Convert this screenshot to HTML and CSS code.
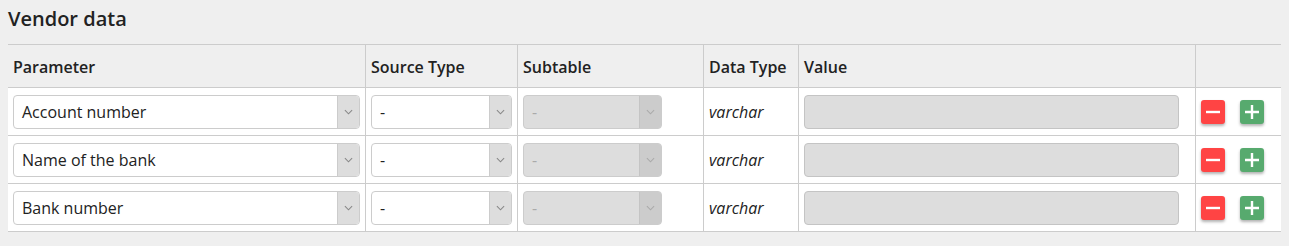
FILE: index.html
```html
<!DOCTYPE html>
<html lang="en">

<head>
    <meta charset="UTF-8">
    <meta name="viewport" content="width=device-width, initial-scale=1.0">
    <title>Vendor data</title>
    <link rel="stylesheet" href="styles.css">
</head>

<body>

    <h2 class="section_title">Vendor data</h2>

    <table class="param_table">
        <thead>
            <tr>
                <th class="col_param">Parameter</th>
                <th class="col_source">Source Type</th>
                <th class="col_sub">Subtable</th>
                <th class="col_type">Data Type</th>
                <th class="col_value">Value</th>
                <th class="col_actions"></th>
            </tr>
        </thead>
        <tbody>
            <tr>
                <td>
                    <div class="fake_select">
                        <span class="fake_select_text">Account number</span>
                        <span class="fake_select_arrow"><svg viewBox="0 0 10 6"><path d="M1 1l4 4 4-4"/></svg></span>
                    </div>
                </td>
                <td>
                    <div class="fake_select">
                        <span class="fake_select_text">-</span>
                        <span class="fake_select_arrow"><svg viewBox="0 0 10 6"><path d="M1 1l4 4 4-4"/></svg></span>
                    </div>
                </td>
                <td>
                    <div class="fake_select disabled">
                        <span class="fake_select_text">-</span>
                        <span class="fake_select_arrow"><svg viewBox="0 0 10 6"><path d="M1 1l4 4 4-4"/></svg></span>
                    </div>
                </td>
                <td class="data_type">varchar</td>
                <td><div class="value_input"></div></td>
                <td>
                    <div class="actions">
                        <span class="btn btn_remove"><svg viewBox="0 0 24 24"><path d="M5 12h14"/></svg></span>
                        <span class="btn btn_add"><svg viewBox="0 0 24 24"><path d="M5 12h14M12 5v14"/></svg></span>
                    </div>
                </td>
            </tr>
            <tr>
                <td>
                    <div class="fake_select">
                        <span class="fake_select_text">Name of the bank</span>
                        <span class="fake_select_arrow"><svg viewBox="0 0 10 6"><path d="M1 1l4 4 4-4"/></svg></span>
                    </div>
                </td>
                <td>
                    <div class="fake_select">
                        <span class="fake_select_text">-</span>
                        <span class="fake_select_arrow"><svg viewBox="0 0 10 6"><path d="M1 1l4 4 4-4"/></svg></span>
                    </div>
                </td>
                <td>
                    <div class="fake_select disabled">
                        <span class="fake_select_text">-</span>
                        <span class="fake_select_arrow"><svg viewBox="0 0 10 6"><path d="M1 1l4 4 4-4"/></svg></span>
                    </div>
                </td>
                <td class="data_type">varchar</td>
                <td><div class="value_input"></div></td>
                <td>
                    <div class="actions">
                        <span class="btn btn_remove"><svg viewBox="0 0 24 24"><path d="M5 12h14"/></svg></span>
                        <span class="btn btn_add"><svg viewBox="0 0 24 24"><path d="M5 12h14M12 5v14"/></svg></span>
                    </div>
                </td>
            </tr>
            <tr>
                <td>
                    <div class="fake_select">
                        <span class="fake_select_text">Bank number</span>
                        <span class="fake_select_arrow"><svg viewBox="0 0 10 6"><path d="M1 1l4 4 4-4"/></svg></span>
                    </div>
                </td>
                <td>
                    <div class="fake_select">
                        <span class="fake_select_text">-</span>
                        <span class="fake_select_arrow"><svg viewBox="0 0 10 6"><path d="M1 1l4 4 4-4"/></svg></span>
                    </div>
                </td>
                <td>
                    <div class="fake_select disabled">
                        <span class="fake_select_text">-</span>
                        <span class="fake_select_arrow"><svg viewBox="0 0 10 6"><path d="M1 1l4 4 4-4"/></svg></span>
                    </div>
                </td>
                <td class="data_type">varchar</td>
                <td><div class="value_input"></div></td>
                <td>
                    <div class="actions">
                        <span class="btn btn_remove"><svg viewBox="0 0 24 24"><path d="M5 12h14"/></svg></span>
                        <span class="btn btn_add"><svg viewBox="0 0 24 24"><path d="M5 12h14M12 5v14"/></svg></span>
                    </div>
                </td>
            </tr>
        </tbody>
    </table>

</body>

</html>
```

FILE: styles.css
```css
body {
    margin: 0;
    padding: 0 8px;
    background: #efefef;
    font-family: "Open Sans", sans-serif;
    color: #222;
}

.section_title {
    margin: 0;
    padding: 6px 0 0;
    height: 44px;
    box-sizing: border-box;
    font-size: 20px;
    font-weight: 600;
    line-height: 26px;
}

.param_table {
    width: 1273px;
    border-collapse: collapse;
    table-layout: fixed;
}

.param_table th,
.param_table td {
    border: 1px solid #cccccc;
    padding: 7px 5px 6px;
    text-align: left;
    vertical-align: middle;
}

.param_table th:first-child,
.param_table td:first-child {
    border-left: none;
}

.param_table th:last-child,
.param_table td:last-child {
    border-right: none;
}

.param_table th {
    height: 29px;
    font-size: 16px;
    font-weight: 600;
    background: #efefef;
}

.param_table td {
    height: 34px;
    background: #ffffff;
}

.col_param { width: 347px; }
.col_source { width: 141px; }
.col_sub { width: 175px; }
.col_type { width: 84px; }
.col_value { width: 386px; }

.fake_select {
    display: flex;
    height: 34px;
    box-sizing: border-box;
    border: 1px solid #cccccc;
    border-radius: 4px;
    background: #ffffff;
    overflow: hidden;
}

.fake_select_text {
    flex: 1;
    padding-left: 8px;
    font-size: 16px;
    line-height: 32px;
    color: #222;
    white-space: nowrap;
}

.fake_select_arrow {
    width: 21px;
    border-left: 1px solid #cccccc;
    background: #dddddd;
    display: flex;
    align-items: center;
    justify-content: center;
}

.fake_select_arrow svg {
    width: 9px;
    height: 6px;
    fill: none;
    stroke: #888888;
    stroke-width: 1.2;
}

.fake_select.disabled {
    width: 139px;
    background: #dddddd;
}

.fake_select.disabled .fake_select_text {
    color: #aaaaaa;
}

.fake_select.disabled .fake_select_arrow {
    background: #cccccc;
    border-left-color: #c4c4c4;
}

.fake_select.disabled .fake_select_arrow svg {
    stroke: #aaaaaa;
}

.data_type {
    font-size: 16px;
    font-style: italic;
}

.value_input {
    height: 34px;
    box-sizing: border-box;
    border: 1px solid #c4c4c4;
    border-radius: 4px;
    background: #dddddd;
    margin-right: 11px;
}

.actions {
    display: flex;
    gap: 15px;
}

.btn {
    display: flex;
    align-items: center;
    justify-content: center;
    width: 24px;
    height: 24px;
    border-radius: 3px;
    box-shadow: 0 2px 3px rgba(0, 0, 0, 0.3);
}

.btn svg {
    width: 24px;
    height: 24px;
    fill: none;
    stroke: #ffffff;
    stroke-width: 2.4;
}

.btn_remove {
    background: #ff4444;
}

.btn_add {
    background: #57aa6e;
}
```
